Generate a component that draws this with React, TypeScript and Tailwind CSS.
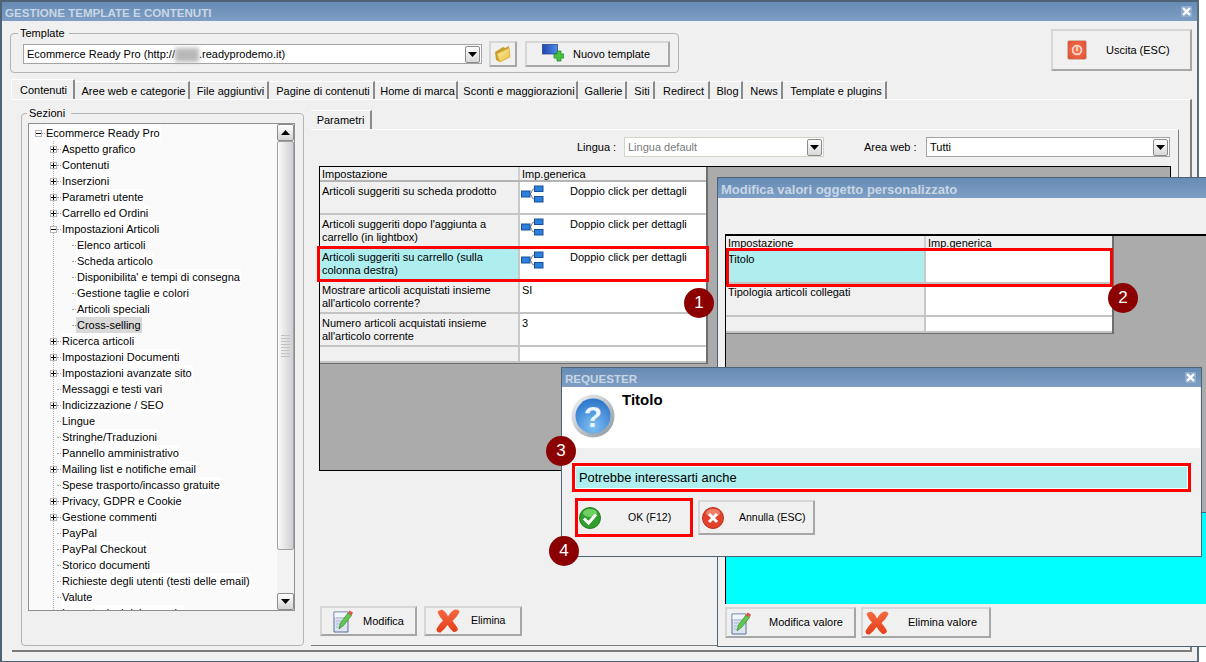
import React from "react";

const Bevel = "border-2 border-[#d6d6d6] border-r-[#a6a6a6] border-b-[#a6a6a6] bg-[#f0f0f0]";

function Arrow({ up = false }: { up?: boolean }) {
  return (
    <svg width="9" height="5" viewBox="0 0 9 5">
      <polygon points={up ? "4.5,0 9,5 0,5" : "0,0 9,0 4.5,5"} fill="#000" />
    </svg>
  );
}

function Combo({ w, text, disabled = false, children }: { w: string; text?: string; disabled?: boolean; children?: React.ReactNode }) {
  return (
    <div className={`${w} h-[20px] bg-white border flex items-center pl-[3px] pr-[1px] ${disabled ? "border-[#d3d3c8] text-[#7a7a7a]" : "border-[#a3a3a3]"}`}>
      <div className="flex-1 flex items-center min-w-0 whitespace-nowrap pt-px">{text}{children}</div>
      <div className="w-[15px] h-[17px] rounded-[2px] border border-[#8c8c8c] bg-gradient-to-b from-white to-[#d8d8d8] flex items-center justify-center">
        <Arrow />
      </div>
    </div>
  );
}

function Folder() {
  return (
    <svg width="18" height="18" viewBox="0 0 18 18">
      <defs>
        <linearGradient id="fg" x1="0" y1="0" x2="1" y2="1">
          <stop offset="0" stopColor="#fdf0a8" />
          <stop offset="1" stopColor="#e9bd3c" />
        </linearGradient>
      </defs>
      <path d="M1 7 L9 2 L11 3 L15 1 L16 12 L6 17 L2 15 Z" fill="#c9a02c" />
      <path d="M3 9 L15 3 L16 12 L6 17 Z" fill="url(#fg)" stroke="#d6ad3a" strokeWidth="0.6" />
    </svg>
  );
}

function NewTpl() {
  return (
    <svg width="22" height="20" viewBox="0 0 22 20">
      <defs>
        <linearGradient id="ng" x1="0" y1="0" x2="1" y2="0">
          <stop offset="0" stopColor="#1f45b0" />
          <stop offset="1" stopColor="#4f8ee8" />
        </linearGradient>
      </defs>
      <rect x="0.5" y="0.5" width="15" height="9.5" fill="url(#ng)" stroke="#1d3a8c" strokeWidth="0.7" />
      <path d="M12 10h3V7h4v3h3v4h-3v3h-4v-3h-3z" fill="#4dc43f" stroke="#25862b" strokeWidth="0.8" />
    </svg>
  );
}

function PowerIcon() {
  return (
    <svg width="20" height="20" viewBox="0 0 20 20">
      <defs>
        <radialGradient id="pg" cx="0.5" cy="0.5" r="0.7">
          <stop offset="0" stopColor="#f47a55" />
          <stop offset="1" stopColor="#dc4a30" />
        </radialGradient>
      </defs>
      <rect x="0.5" y="0.5" width="19" height="19" rx="2" fill="url(#pg)" stroke="#d3b8ae" />
      <circle cx="10" cy="10" r="4.4" fill="none" stroke="#fbdcd2" strokeWidth="1.7" />
      <rect x="9.2" y="6.8" width="1.6" height="4.4" fill="#fbdcd2" />
    </svg>
  );
}

function LinkIcon() {
  return (
    <svg width="24" height="18" viewBox="0 0 24 18" className="shrink-0">
      <path d="M9 9 C11 9 10 4 13 4 M9 9 C11 9 10 14 13 14" fill="none" stroke="#555" strokeWidth="0.8" />
      <rect x="0.5" y="6" width="8.5" height="6" fill="#2a80dc" stroke="#1c4e94" />
      <rect x="13.5" y="1" width="8.5" height="5.5" fill="#2a80dc" stroke="#1c4e94" />
      <rect x="13.5" y="11.5" width="8.5" height="5.5" fill="#2a80dc" stroke="#1c4e94" />
    </svg>
  );
}

function EditIcon() {
  return (
    <svg width="22" height="24" viewBox="0 0 22 24">
      <path d="M1 3 H15 V23 H1 Z" fill="#dde4f0" stroke="#5b6f99" />
      <path d="M1.5 3.5 H14.5 V8 H1.5 Z" fill="#f2f5fa" />
      <path d="M3 9h10M3 12h10M3 15h6M3 18h5" stroke="#a8b4cc" />
      <path d="M6 20 L7.5 14 L15 4 L18.5 6.5 L10.5 16.5 Z" fill="#62c84e" stroke="#2f8a2c" strokeWidth="0.7" />
      <path d="M15 4 L16.5 1.5 L20 3.5 L18.5 6.5 Z" fill="#d85848" />
    </svg>
  );
}

function BigX() {
  return (
    <svg width="24" height="24" viewBox="0 0 24 24">
      <defs>
        <linearGradient id="xg" x1="0" y1="0" x2="0" y2="1">
          <stop offset="0" stopColor="#f46a42" />
          <stop offset="1" stopColor="#e63d18" />
        </linearGradient>
      </defs>
      <path d="M1.5 3 Q4 0 7 1 Q10 3 12 7.5 Q15 2 19 0.5 Q23 0 23.5 3 Q21 8 16.5 12 Q20 16 22 20 Q21 23.5 17.5 23 Q14 20 11.5 16 Q8 21 4.5 23.5 Q0.5 24 0.5 20 Q3 15 7 11.5 Q3.5 8 1.5 3 Z" fill="url(#xg)" />
    </svg>
  );
}

function OkIcon() {
  return (
    <svg width="22" height="22" viewBox="0 0 22 22">
      <circle cx="11" cy="11" r="10.5" fill="#2f9e2f" stroke="#217a21" />
      <ellipse cx="11" cy="6" rx="7" ry="4" fill="#6fcf63" />
      <path d="M5 11.5 L9.5 16 L17 7.5" fill="none" stroke="#fff" strokeWidth="3" />
    </svg>
  );
}

function CancelIcon() {
  return (
    <svg width="22" height="22" viewBox="0 0 22 22">
      <circle cx="11" cy="11" r="10.5" fill="#e2422c" stroke="#b83220" />
      <ellipse cx="11" cy="6" rx="7" ry="4" fill="#f0806a" />
      <path d="M7 7 L15 15 M15 7 L7 15" fill="none" stroke="#fff" strokeWidth="3" />
    </svg>
  );
}

function QuestionIcon() {
  return (
    <svg width="44" height="44" viewBox="0 0 44 44">
      <defs>
        <radialGradient id="qb" cx="0.5" cy="0.8" r="0.8">
          <stop offset="0" stopColor="#7fc0f4" />
          <stop offset="1" stopColor="#2a73c8" />
        </radialGradient>
        <linearGradient id="qr" x1="0" y1="0" x2="1" y2="1">
          <stop offset="0" stopColor="#f4f6f8" />
          <stop offset="1" stopColor="#8a949e" />
        </linearGradient>
      </defs>
      <circle cx="22" cy="22" r="21.5" fill="url(#qr)" />
      <circle cx="22" cy="22" r="17.5" fill="url(#qb)" />
      <text x="22" y="33" textAnchor="middle" fontSize="30" fontWeight="700" fill="#eef4fb" fontFamily="Liberation Sans, sans-serif">?</text>
    </svg>
  );
}

function Close() {
  return (
    <div className="w-[11px] h-[11px] bg-[#8eabcc] flex items-center justify-center">
      <svg width="9" height="9" viewBox="0 0 9 9"><path d="M1 1 L8 8 M8 1 L1 8" stroke="#ffffff" strokeWidth="2.4" /></svg>
    </div>
  );
}

function Title({ text, big = false, close = false, h }: { text: string; big?: boolean; close?: boolean; h: string }) {
  return (
    <div className={`${h} shrink-0 bg-gradient-to-b from-[#668cb5] to-[#7e9ec4] flex items-center justify-between pl-[3px] pr-[5px] font-bold text-[#c9d6e5] ${big ? "text-[13px]" : "text-[11.6px]"}`}>
      <span className="whitespace-nowrap pt-[3px]">{text}</span>
      {close && <Close />}
    </div>
  );
}

const tabs: [string, string][] = [
  ["Aree web e categorie", "w-[115px]"],
  ["File aggiuntivi", "w-[79px]"],
  ["Pagine di contenuti", "w-[106px]"],
  ["Home di marca", "w-[83px]"],
  ["Sconti e maggiorazioni", "w-[120px]"],
  ["Gallerie", "w-[49px]"],
  ["Siti", "w-[28px]"],
  ["Redirect", "w-[55px]"],
  ["Blog", "w-[33px]"],
  ["News", "w-[40px]"],
  ["Template e plugins", "w-[104px]"],
];

type Node = { t: string; l: 0 | 1 | 2; e?: "+" | "-"; sel?: boolean };
const tree: Node[] = [
  { t: "Ecommerce Ready Pro", l: 0, e: "-" },
  { t: "Aspetto grafico", l: 1, e: "+" },
  { t: "Contenuti", l: 1, e: "+" },
  { t: "Inserzioni", l: 1, e: "+" },
  { t: "Parametri utente", l: 1, e: "+" },
  { t: "Carrello ed Ordini", l: 1, e: "+" },
  { t: "Impostazioni Articoli", l: 1, e: "-" },
  { t: "Elenco articoli", l: 2 },
  { t: "Scheda articolo", l: 2 },
  { t: "Disponibilita' e tempi di consegna", l: 2 },
  { t: "Gestione taglie e colori", l: 2 },
  { t: "Articoli speciali", l: 2 },
  { t: "Cross-selling", l: 2, sel: true },
  { t: "Ricerca articoli", l: 1, e: "+" },
  { t: "Impostazioni Documenti", l: 1, e: "+" },
  { t: "Impostazioni avanzate sito", l: 1, e: "+" },
  { t: "Messaggi e testi vari", l: 1 },
  { t: "Indicizzazione / SEO", l: 1, e: "+" },
  { t: "Lingue", l: 1 },
  { t: "Stringhe/Traduzioni", l: 1 },
  { t: "Pannello amministrativo", l: 1 },
  { t: "Mailing list e notifiche email", l: 1, e: "+" },
  { t: "Spese trasporto/incasso gratuite", l: 1 },
  { t: "Privacy, GDPR e Cookie", l: 1, e: "+" },
  { t: "Gestione commenti", l: 1, e: "+" },
  { t: "PayPal", l: 1 },
  { t: "PayPal Checkout", l: 1 },
  { t: "Storico documenti", l: 1 },
  { t: "Richieste degli utenti (testi delle email)", l: 1 },
  { t: "Valute", l: 1 },
  { t: "Impostazioni del negozio", l: 1 },
];

function Expander({ s }: { s: "+" | "-" }) {
  return (
    <div className="relative w-[7px] h-[7px] border border-[#b5b5b5] bg-white shrink-0">
      <div className="absolute left-0 right-0 top-[2px] h-px bg-black" />
      {s === "+" && <div className="absolute top-0 bottom-0 left-[2px] w-px bg-black" />}
    </div>
  );
}

function TreeRow({ n }: { n: Node }) {
  const pad = n.l === 0 ? "pl-[6px]" : n.l === 1 ? "pl-[21px]" : "pl-[36px]";
  const lead = n.l === 0 ? "w-[3px]" : "w-[4px]";
  return (
    <div className={`h-[16px] flex items-center ${pad}`}>
      {n.e ? <Expander s={n.e} /> : <div className="w-[7px] shrink-0" />}
      <div className={`${lead} border-t border-dotted border-[#a0a0a0] shrink-0`} />
      <span className={`px-px h-[16px] leading-[16px] whitespace-nowrap ${n.sel ? "bg-[#d9d9d9]" : "bg-white"}`}>{n.t}</span>
    </div>
  );
}

function Scrollbar() {
  const btn = "h-[17px] shrink-0 rounded-[2px] border border-[#8c8c8c] bg-gradient-to-b from-white to-[#d4d4d4] flex items-center justify-center";
  return (
    <div className="w-[17px] h-full flex flex-col bg-[#f3f3f3] shrink-0">
      <div className={btn}><Arrow up /></div>
      <div className="h-[409px] shrink-0 border border-[#a0a0a0] rounded-[2px] bg-gradient-to-r from-[#fafafa] to-[#cfcfd4] flex items-center justify-center">
        <div className="w-[9px] h-[22px] bg-[repeating-linear-gradient(0deg,#c2c2c2_0,#c2c2c2_1px,transparent_1px,transparent_3px)]" />
      </div>
      <div className="flex-1" />
      <div className={btn}><Arrow /></div>
    </div>
  );
}

type Row = { a: string[]; b?: string; link?: boolean; hi?: boolean; h: string };

function Grid({ rows, left, right, outer, cellPad, headLead }: { rows: Row[]; left: string; right: string; outer: string; cellPad: string; headLead: string }) {
  return (
    <div className={`${outer} bg-white border-r-2 border-b-2 border-[#6e6e6e]`}>
      <div className="flex h-[15px] bg-[#f0f0f0] border-b-2 border-[#b4b4b4]">
        <div className={`${left} pl-[2px] ${headLead} border-r-2 border-[#d0d0d0]`}>Impostazione</div>
        <div className={`${right} pl-[2px] ${headLead}`}>Imp.generica</div>
      </div>
      {rows.map((r, i) => (
        <div key={i} className={`flex ${r.h} border-b-2 border-[#c4c4c4]`}>
          <div className={`${left} pl-[2px] ${cellPad} leading-[13px] border-r-2 border-[#c8c8c8] ${r.hi ? "bg-[#aeeeee]" : "bg-[#f0f0f0]"}`}>
            {r.a.map((x) => <div key={x} className="whitespace-nowrap">{x}</div>)}
          </div>
          <div className={`${right} pl-[1px] ${cellPad} leading-[13px] flex items-start`}>
            {r.link ? (
              <>
                <LinkIcon />
                <span className="ml-[25px] whitespace-nowrap">Doppio click per dettagli</span>
              </>
            ) : (
              <span className="pl-[1px]">{r.b}</span>
            )}
          </div>
        </div>
      ))}
    </div>
  );
}

function Badge({ n, cls }: { n: number; cls: string }) {
  return (
    <div className={`absolute w-[30px] h-[30px] rounded-full bg-[#8b0000] text-white text-[17px] flex items-center justify-center ${cls}`}>{n}</div>
  );
}

const mainRows: Row[] = [
  { a: ["Articoli suggeriti su scheda prodotto"], link: true, h: "h-[33px]" },
  { a: ["Articoli suggeriti dopo l'aggiunta a", "carrello (in lightbox)"], link: true, h: "h-[33px]" },
  { a: ["Articoli suggeriti su carrello (sulla", "colonna destra)"], link: true, hi: true, h: "h-[33px]" },
  { a: ["Mostrare articoli acquistati insieme", "all'articolo corrente?"], b: "SI", h: "h-[33px]" },
  { a: ["Numero articoli acquistati insieme", "all'articolo corrente"], b: "3", h: "h-[33px]" },
  { a: [""], h: "h-[16px]" },
];

const subRows: Row[] = [
  { a: ["Titolo"], hi: true, h: "h-[33px]" },
  { a: ["Tipologia articoli collegati"], h: "h-[33px]" },
  { a: [""], h: "h-[16px]" },
];

export default function App() {
  return (
    <div className="relative w-[1206px] h-[662px] overflow-hidden bg-white text-[11px] text-black font-['Liberation_Sans',Arial,sans-serif]">
      {/* main window */}
      <div className="w-[1199px] h-[662px] flex flex-col bg-[#f0f0f0] border-2 border-[#4f6377] border-r-[#5a6c80] border-b">
        <Title text="GESTIONE TEMPLATE E CONTENUTI" close h="h-[19px]" />

        {/* top row */}
        <div className="flex justify-between items-start h-[58px] pl-[8px] pr-[5px]">
          <fieldset className="w-[669px] min-w-0 h-[47px] mt-[5px] border border-[#b4b4b4] rounded-[4px] pl-[12px] pr-0 flex items-start">
            <legend className="ml-[-5px] pl-[2px] pr-[4px] leading-[14px]">Template</legend>
            <div className="flex items-start gap-[7px] mt-[1px]">
              <div className="mt-[3px]">
                <Combo w="w-[459px]">
                  <span>Ecommerce Ready Pro (http://</span>
                  <span className="inline-block w-[24px] h-[14px] bg-[#b8b8b8] blur-[2px]" />
                  <span>.readyprodemo.it)</span>
                </Combo>
              </div>
              <div className={`${Bevel} w-[28px] h-[26px] flex items-center justify-center`}><Folder /></div>
              <div className={`${Bevel} ml-[1px] w-[145px] h-[26px] flex items-center pl-[15px] gap-[9px]`}>
                <NewTpl />
                <span>Nuovo template</span>
              </div>
            </div>
          </fieldset>
          <div className={`${Bevel} w-[141px] h-[42px] mt-[8px] flex items-center pl-[14px]`}>
            <PowerIcon />
            <span className="ml-[19px]">Uscita (ESC)</span>
          </div>
        </div>

        {/* tabs */}
        <div className="flex items-end h-[20px] ml-[9px]">
          <div className="w-[64px] h-[20px] pt-[1px] pl-[2px] bg-[#f0f0f0] border-t border-l border-white border-r-2 border-r-[#8a8a8a] rounded-t-[2px] flex items-center justify-center">Contenuti</div>
          {tabs.map(([t, w]) => (
            <div key={t} className={`${w} h-[18px] shrink-0 pt-[1px] pl-[4px] border-t border-white border-r-2 border-r-[#8a8a8a] flex items-center justify-center whitespace-nowrap`}>{t}</div>
          ))}
        </div>

        {/* tab panel */}
        <div className="ml-[10px] w-[1180px] h-[553px] border-t border-t-white border-r-2 border-r-[#7c7c7c] border-b-2 border-b-[#7c7c7c] flex">
          {/* Sezioni */}
          <fieldset className="ml-[9px] mt-[6px] w-[283px] h-[540px] border border-[#b4b4b4] rounded-[4px] pl-[6px] pr-0 shrink-0">
            <legend className="ml-[-1px] pl-[2px] pr-[6px] leading-[14px]">Sezioni</legend>
            <div className="h-[488px] mt-[3px] w-[267px] border border-[#8f8f8f] flex bg-[#fafafa] overflow-hidden">
              <div className="relative flex-1 overflow-hidden">
                <div className="absolute left-[24px] top-[16px] h-[480px] border-l border-dotted border-[#b0b0b0]" />
                <div className="relative pt-[1px]">
                  {tree.map((n) => <TreeRow key={n.t} n={n} />)}
                </div>
              </div>
              <Scrollbar />
            </div>
          </fieldset>

          {/* Parametri */}
          <div className="ml-[7px] mt-[10px] w-[868px] flex flex-col">
            <div className="w-[61px] h-[19px] shrink-0 border-t border-white border-r-2 border-r-[#8a8a8a] flex items-center justify-center">Parametri</div>
            <div className="h-[517px] border-t border-t-white border-r border-r-[#7c7c7c] border-b border-b-[#7c7c7c] pt-[7px] flex flex-col">
              <div className="flex items-center h-[20px] shrink-0">
                <span className="ml-[266px] w-[47px]">Lingua :</span>
                <Combo w="w-[200px]" text="Lingua default" disabled />
                <span className="ml-[40px] w-[62px]">Area web :</span>
                <Combo w="w-[244px]" text="Tutti" />
              </div>
              <div className="ml-[8px] mt-[9px] w-[852px] h-[305px] shrink-0 bg-[#ababab] border border-black">
                <Grid rows={mainRows} left="w-[200px]" right="w-[186px]" outer="w-[388px] h-[197px]" cellPad="pt-[3px]" headLead="leading-[15px]" />
              </div>
              <div className="ml-[9px] mt-[135px] flex gap-[7px]">
                <div className={`${Bevel} w-[97px] h-[30px] flex items-center pl-[11px] gap-[8px]`}>
                  <EditIcon />
                  <span>Modifica</span>
                </div>
                <div className={`${Bevel} w-[98px] h-[30px] flex items-center pl-[10px] gap-[11px]`}>
                  <BigX />
                  <span className="text-[10.5px]">Elimina</span>
                </div>
              </div>
            </div>
          </div>
        </div>
      </div>

      {/* annotations on main grid */}
      <div className="absolute left-[317px] top-[246px] w-[392px] h-[36px] border-[3px] border-[#ff0000]" />
      <Badge n={1} cls="left-[684px] top-[288px]" />

      {/* Modifica window */}
      <div className="absolute left-[717px] top-[177px] w-[495px] h-[470px] flex flex-col bg-[#f0f0f0] border border-[#4f6377]">
        <Title text="Modifica valori oggetto personalizzato" big h="h-[20px]" />
        <div className="h-[36px] shrink-0" />
        <div className="ml-[7px] h-[370px] shrink-0 flex flex-col justify-between bg-[#ababab] border-t-2 border-l border-black">
          <Grid rows={subRows} left="w-[200px]" right="w-[186px]" outer="w-[388px] h-[98px]" cellPad="pt-[2px]" headLead="leading-[14px]" />
          <div className="h-[92px] bg-[#00ffff] border-t border-[#4f6377]" />
        </div>
        <div className="ml-[7px] mt-[3px] flex gap-[5px]">
          <div className={`${Bevel} w-[131px] h-[31px] flex items-center pl-[4px]`}>
            <EditIcon />
            <span className="ml-[16px]">Modifica valore</span>
          </div>
          <div className={`${Bevel} w-[130px] h-[31px] flex items-center pl-[2px]`}>
            <BigX />
            <span className="ml-[19px]">Elimina valore</span>
          </div>
        </div>
      </div>
      <div className="absolute left-[726px] top-[248px] w-[387px] h-[39px] border-[3px] border-[#ff0000]" />
      <Badge n={2} cls="left-[1108px] top-[283px]" />

      {/* Requester */}
      <div className="absolute left-[561px] top-[367px] w-[641px] h-[190px] flex flex-col bg-[#f0f0f0] border border-[#4f6377]">
        <Title text="REQUESTER" close h="h-[19px]" />
        <div className="h-[61px] shrink-0 bg-white flex items-start pl-[9px] pt-[7px] mr-[1px]">
          <QuestionIcon />
          <span className="ml-[7px] mt-[-5px] text-[15px] font-bold">Titolo</span>
        </div>
        <div className="ml-[10px] mt-[15px] w-[619px] h-[29px] shrink-0 border-[3px] border-[#ff0000] p-px bg-white">
          <div className="h-full bg-[#aeeeee] pl-[3px] flex items-center text-[12.9px]">Potrebbe interessarti anche</div>
        </div>
        <div className="ml-[13px] mt-[6px] flex items-start">
          <div className="w-[118px] h-[39px] border-[3px] border-[#ff0000] bg-[#f0f0f0] flex items-center pl-[1px]">
            <OkIcon />
            <span className="ml-[27px] text-[10.5px]">OK (F12)</span>
          </div>
          <div className={`${Bevel} ml-[5px] mt-[2px] w-[117px] h-[35px] flex items-center pl-[2px]`}>
            <CancelIcon />
            <span className="ml-[15px] text-[10.5px]">Annulla (ESC)</span>
          </div>
        </div>
      </div>
      <Badge n={3} cls="left-[546px] top-[436px]" />
      <Badge n={4} cls="left-[549px] top-[536px]" />
    </div>
  );
}
